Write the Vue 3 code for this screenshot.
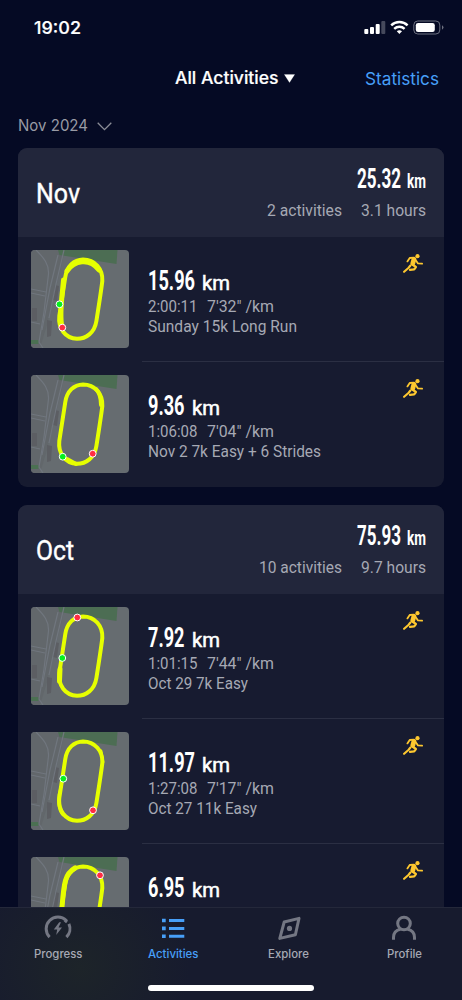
<script setup>
import { h } from 'vue'

// Single line of text set to an exact advance width on a known baseline.
// sx condenses the glyphs themselves.
const Fit = (p) => {
  const sx = p.sx || 1
  return h('svg', { class: 'fit', width: p.w, height: p.lh, style: { display: 'block', overflow: 'visible', flex: 'none' } }, [
    h('text', { x: 0, y: p.b, transform: `scale(${sx} 1)`, textLength: p.w / sx, lengthAdjust: 'spacingAndGlyphs' }, p.t)
  ])
}
Fit.props = ['t', 'w', 'lh', 'b', 'sx']

const loop = 'M34.3 27 C36 16 43 9.6 52 9.4 C64 9.4 72 19 71.3 31 C70.8 36 66.5 64 65.4 71 C63.5 83 55 88.8 46 88.8 C34 88.4 27 78 28.3 66 Z'

const months = [
  {
    name: 'Nov', nameW: 44, km: '25.32', count: '2 activities', countW: 75, hours: '3.1 hours',
    runs: [
      { km: '15.96', kw: 47, time: '2:00:11', pace: `7'32" /km`, title: 'Sunday 15k Long Run', tw: 149, g: [28.5, 54.3], r: [31.3, 77.6], extra: 'M36 21 C43 11 58 7 68 20 M32.5 30 C31 48 28 65 31 77', ew: 5 },
      { km: '9.36', kw: 36.5, time: '1:06:08', pace: `7'04" /km`, title: 'Nov 2 7k Easy + 6 Strides', tw: 173, g: [31.7, 81.7], r: [61.7, 78.7], extra: 'M65 14 C69 18 70 24 70 30 M36 84 L45 89', ew: 4 }
    ]
  },
  {
    name: 'Oct', nameW: 38, km: '75.93', count: '10 activities', countW: 83, hours: '9.7 hours',
    runs: [
      { km: '7.92', kw: 36.5, time: '1:01:15', pace: `7'44" /km`, title: 'Oct 29 7k Easy', tw: 100, g: [31.3, 51], r: [46.3, 10.5], extra: 'M29 62 L28.5 74', ew: 5 },
      { km: '11.97', kw: 47, time: '1:27:08', pace: `7'17" /km`, title: 'Oct 27 11k Easy', tw: 109, g: [32.3, 46.7], r: [62, 78.3], extra: 'M30 55 C26 66 27 78 32 83 M70 19 L72 30', ew: 2.8 },
      { km: '6.95', kw: 36.5, time: '', pace: '/km', title: '', tw: 0, g: null, r: [69, 18.3], extra: 'M44 11 C34 17 33 25 31 50', ew: 5 }
    ]
  }
]
</script>

<template>
  <div class="phone">
    <header class="status">
      <Fit class="clock" t="19:02" :w="47" :lh="20" :b="16" />
      <svg width="80" height="16" viewBox="0 0 80 16">
        <g fill="#fff">
          <rect x="0.3" y="9" width="4" height="5" rx="1" />
          <rect x="6" y="7" width="4" height="7" rx="1" />
          <rect x="11.7" y="4" width="4" height="10" rx="1" />
          <rect x="17.3" y="1" width="4" height="13" rx="1" opacity=".26" />
        </g>
        <g fill="none" stroke="#fff" stroke-width="2.4">
          <path d="M27.2 5.4 C31.8 .9 39 .9 43.6 5.4" />
          <path d="M30.2 8.8 C33.2 6 37.6 6 40.6 8.8" />
        </g>
        <path d="M32.8 11.2 C34.3 9.8 36.5 9.8 38 11.2 L35.4 14 Z" fill="#fff" />
        <rect x="49.8" y="1" width="26" height="13" rx="4" fill="none" stroke="#6d7080" />
        <rect x="51.8" y="3" width="19" height="9" rx="2.3" fill="#fff" />
        <path d="M78 5.3 q3 2.2 0 4.4z" fill="#6d7080" />
      </svg>
    </header>

    <nav class="top">
      <div class="filter">
        <Fit t="All Activities" :w="103.5" :lh="22" :b="17" />
        <svg width="11" height="9" viewBox="0 0 11 9"><path d="M.3 .4 H10.7 L5.5 8.6Z" fill="#fff" /></svg>
      </div>
      <Fit class="stats" t="Statistics" :w="74" :lh="22" :b="17.5" />
    </nav>

    <div class="month-pick">
      <Fit t="Nov 2024" :w="70" :lh="20" :b="16" />
      <svg width="15" height="9" viewBox="0 0 15 9"><path d="M.7 .7 L7.5 7.6 L14.3 .7" fill="none" stroke="#8b8d97" stroke-width="1.3" /></svg>
    </div>

    <main class="list">
      <section v-for="m in months" :key="m.name" class="card">
        <div class="head">
          <Fit class="name" :t="m.name" :w="m.nameW" :lh="30" :b="25" />
          <div class="sum">
            <div class="total">
              <Fit class="num" :t="m.km" :w="44" :lh="24" :b="22" :sx="0.64" />
              <Fit class="num unit-s" t="km" :w="19" :lh="24" :b="22" :sx="0.75" />
            </div>
            <div class="meta">
              <Fit :t="m.count" :w="m.countW" :lh="16" :b="13" />
              <Fit :t="m.hours" :w="65" :lh="16" :b="13" />
            </div>
          </div>
        </div>
        <article v-for="(r, i) in m.runs" :key="r.km" class="run">
          <svg class="map" width="98" height="98" viewBox="0 0 98 98">
            <rect width="98" height="98" fill="#666c70" />
            <path d="M0 0 H34 L16 75 L9 98 H0Z" fill="#62676b" />
            <path d="M27 0 H86.5 L85.5 14 L28.5 5Z" fill="#4c6d53" />
            <path d="M0 90 H7 Q9 92 7 94 H0Z" fill="#4b7052" />
            <path d="M16 70 L21 71 L20 86 L16 87Z M1 58 h5 v13 h-5z M24 35 l4 1 l-2 15 l-4 -1z" fill="#5c5e63" />
            <g fill="none" stroke="#70767e" stroke-width="1.2">
              <path d="M5 0 C13 8 18 14 17.5 24 L13 62 L8 92 L12 98" />
              <path d="M33 0 L25 34 L18 68" />
              <path d="M27 5 L19 38 L11 80" />
              <path d="M0 39 L15 42 M0 43 L14 46 M0 72 L9 74" />
            </g>
            <g fill="none" stroke="#e6ff00" stroke-linecap="round">
              <path :d="loop" stroke-width="4" />
              <path :d="r.extra" :stroke-width="r.ew" />
            </g>
            <circle v-if="r.g" :cx="r.g[0]" :cy="r.g[1]" r="3.4" fill="#04f01e" stroke="#fff" />
            <circle :cx="r.r[0]" :cy="r.r[1]" r="3.4" fill="#ff2d42" stroke="#fff" />
          </svg>
          <div class="body" :class="{ line: i < m.runs.length - 1 }">
            <div class="dist">
              <Fit class="num" :t="r.km" :w="r.kw" :lh="26" :b="22" :sx="0.68" />
              <Fit class="unit" t="km" :w="28" :lh="26" :b="22" />
            </div>
            <div class="pace" :class="{ tail: !r.time }">
              <Fit v-if="r.time" :t="r.time" :w="49.5" :lh="20" :b="19" />
              <Fit v-if="r.time" :t="r.pace" :w="67" :lh="20" :b="19" />
              <Fit v-else :t="r.pace" :w="28" :lh="20" :b="19" />
            </div>
            <Fit v-if="r.title" class="title" :t="r.title" :w="r.tw" :lh="20" :b="19" />
          </div>
          <svg class="runner" width="20" height="19" viewBox="0 0 20 19">
            <circle cx="14.5" cy="2.2" r="2.1" fill="#fdc72f" />
            <g fill="none" stroke="#fdc72f" stroke-linecap="round" stroke-linejoin="round">
              <path d="M10.9 5.4 L9.8 9.4" stroke-width="4.8" />
              <path d="M11 3.7 L6.7 4 L4.4 7.4" stroke-width="1.8" />
              <path d="M12.6 6 L15 9.4 L19.1 9.7" stroke-width="1.8" />
              <path d="M7.4 11.5 L5.4 14 L1.1 17.8" stroke-width="2.1" />
              <path d="M9.8 10.8 L12.9 13 L11.2 15.4 L7 15.8" stroke-width="2.3" />
            </g>
          </svg>
        </article>
      </section>
    </main>

    <footer class="tabs">
      <div class="tab">
        <svg width="28" height="28" viewBox="0 0 28 28" fill="none" stroke="#747783" stroke-width="3">
          <path d="M5.6 23.1 A11.7 11.7 0 0 1 22.3 6.5 L20.9 8.2" stroke-linejoin="round" />
          <path d="M24.9 9.9 A11.7 11.7 0 0 1 22.4 23.1" />
          <path d="M15.2 8.2 L9.8 15.4 H13.2 L12.2 21 L18 13.5 H14.5 L17 8.2Z" fill="#747783" stroke="none" />
        </svg>
        <Fit t="Progress" :w="48.5" :lh="16" :b="12" />
      </div>
      <div class="tab on">
        <svg width="28" height="28" viewBox="0 0 28 28" fill="#479ff8">
          <path d="M3 4.7h3.7v3.6H3zM3 12.6h3.7v3.6H3zM3 20.5h3.7v3.6H3zM10 5h15.3v3H10zM10 12.9h15.3v3H10zM10 20.8h15.3v3H10z" />
        </svg>
        <Fit t="Activities" :w="50.5" :lh="16" :b="12" />
      </div>
      <div class="tab">
        <svg width="28" height="28" viewBox="0 0 28 28">
          <path d="M9.2 8 L24 4.4 L20.4 20.8 L4.8 24.4 Z" fill="none" stroke="#747783" stroke-width="3" stroke-linejoin="round" />
          <circle cx="14.5" cy="14.4" r="2.6" fill="#747783" />
        </svg>
        <Fit t="Explore" :w="41" :lh="16" :b="12" />
      </div>
      <div class="tab">
        <svg width="28" height="28" viewBox="0 0 28 28" fill="none" stroke="#747783" stroke-width="3">
          <circle cx="14" cy="9.5" r="6.3" />
          <path d="M3.5 25.8 V23.5 C3.5 18.5 6.5 16 10.5 15.2 M24.5 25.8 V23.5 C24.5 18.5 21.5 16 17.5 15.2" />
        </svg>
        <Fit t="Profile" :w="35" :lh="16" :b="12" />
      </div>
      <div class="home"></div>
    </footer>
  </div>
</template>

<style>
html, body { background: #050a24; overflow: hidden; }
</style>

<style scoped>
.phone {
  position: relative;
  width: 462px;
  height: 1000px;
  overflow: hidden;
  background: #050a24;
  font-family: Inter, sans-serif;
  fill: #fff;
}
.status {
  display: flex;
  justify-content: space-between;
  padding: 18px 18px 0 34px;
  height: 44px;
  box-sizing: border-box;
}
.status > svg:last-child { margin-top: 2px; }
.clock { font-size: 17.5px; font-weight: 500; stroke: #fff; stroke-width: .2px; }
.top {
  display: flex;
  justify-content: flex-end;
  gap: 70px;
  padding: 23px 23px 0 0;
  height: 62px;
  box-sizing: border-box;
  font-size: 17px;
}
.filter { display: flex; gap: 6px; font-weight: 500; stroke: #fff; stroke-width: .2px; }
.filter svg:last-child { margin-top: 7px; }
.stats { fill: #479ff8; font-size: 17.5px; }
.month-pick {
  display: flex;
  gap: 9px;
  padding: 9px 18px 0;
  height: 41.5px;
  box-sizing: border-box;
  fill: #999ba5;
  font-size: 16px;
}
.month-pick svg:last-child { margin-top: 7px; }
.list {
  display: flex;
  flex-direction: column;
  gap: 17.5px;
  padding: 0 18px;
  font-family: Roboto, sans-serif;
}
.card { background: #171b30; border-radius: 9px; overflow: hidden; flex: none; }
.head {
  display: flex;
  justify-content: space-between;
  height: 89.5px;
  padding: 0 18px;
  background: #22263b;
}
.name { font-size: 27.5px; font-weight: 400; stroke: #fff; stroke-width: .4px; margin-top: 30px; }
.sum { display: flex; flex-direction: column; align-items: flex-end; padding-top: 18.5px; }
.total { display: flex; gap: 6px; }
.num { font-size: 27px; font-weight: 700; }
.unit-s { font-size: 19.5px; }
.meta { display: flex; gap: 19px; margin-top: 13px; font-size: 16px; fill: #a6a9b4; }
.run { display: flex; height: 125px; position: relative; padding-left: 13px; }
.map { margin-top: 13px; border-radius: 4px; flex: none; }
.body { flex: 1; margin-left: 13px; padding: 31px 0 0 6px; box-sizing: border-box; border-bottom: 1px solid transparent; }
.body.line { border-bottom-color: #2b2f43; }
.dist { display: flex; gap: 7px; }
.unit { font-size: 20px; font-weight: 400; stroke: #fff; stroke-width: .5px; }
.pace { display: flex; gap: 9px; margin-top: -1.5px; height: 20px; font-size: 16px; fill: #a6a9b4; }
.pace.tail { padding-left: 86px; }
.title { font-size: 16px; fill: #a6a9b4; }
.runner { position: absolute; right: 21px; top: 16.5px; }
.tabs {
  position: absolute;
  left: 0;
  right: 0;
  top: 907px;
  height: 93px;
  box-sizing: border-box;
  border-top: 1px solid #24283a;
  display: flex;
  background: radial-gradient(ellipse 110px 100px at 80px 60px, #1d2429, #171b2e);
  font-size: 11.5px;
  font-weight: 500;
  fill: #a6a9b4;
}
.tab { flex: 1; display: flex; flex-direction: column; align-items: center; padding-top: 6px; }
.tab .fit { margin-top: 4px; }
.on { fill: #479ff8; }
.home {
  position: absolute;
  left: 148px;
  bottom: 9px;
  width: 166px;
  height: 6px;
  border-radius: 3px;
  background: #fff;
}
</style>
